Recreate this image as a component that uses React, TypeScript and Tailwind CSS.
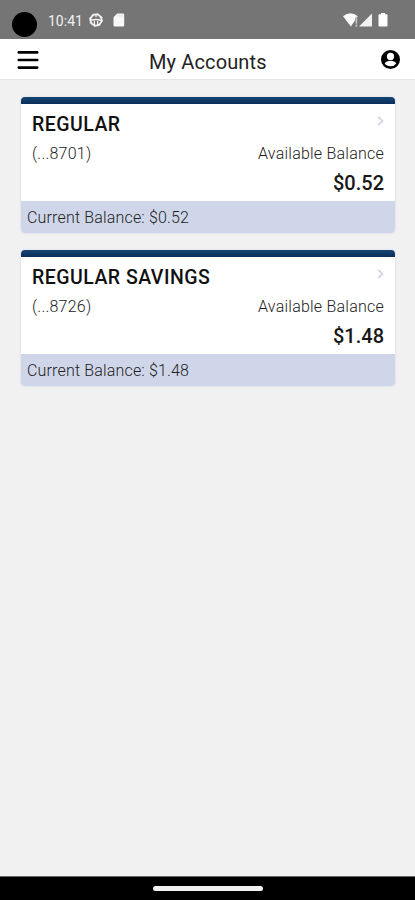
type Account = {
  name: string;
  mask: string;
  available: string;
  current: string;
};

const accounts: Account[] = [
  { name: "REGULAR", mask: "(...8701)", available: "$0.52", current: "$0.52" },
  { name: "REGULAR SAVINGS", mask: "(...8726)", available: "$1.48", current: "$1.48" },
];

function StatusBar() {
  return (
    <div className="flex h-[39px] items-start bg-[#757575] pl-3 pr-[27px] text-white">
      <span className="mt-3 h-[25px] w-[25px] rounded-full bg-black" />
      <span className="ml-[11px] mt-[11px] w-[35px] whitespace-nowrap text-[14px] leading-5 text-[#f0f0f0]">
        10:41
      </span>
      <svg viewBox="0 0 14 14" className="ml-[6px] mt-[13px] h-[14px] w-[14px]" fill="none" stroke="#f4f4f4">
        <circle cx="7" cy="7" r="5.6" strokeWidth="1.8" />
        <circle cx="7" cy="7" r="6.5" strokeWidth=".8" strokeDasharray="2 3.1" />
        <path d="M2.2 7.2Q7 5.6 11.8 7.2" strokeWidth="1.5" />
        <path d="M5.4 8v4M8.6 8v4" strokeWidth="1.2" />
        <path d="M7 2v2.2" strokeWidth="1.2" />
      </svg>
      <svg viewBox="0 0 12 14" className="ml-[10px] mt-[13px] h-[14px] w-3">
        <path d="M4.3.5H10a1.2 1.2 0 0 1 1.2 1.2v10.6a1.2 1.2 0 0 1-1.2 1.2H1.7a1.2 1.2 0 0 1-1.2-1.2V4.3z" fill="#f8f8f8" />
        <path d="M4.8 2v1.6M6.8 2v1.6M8.8 2v1.6" stroke="#d0d0d0" strokeWidth=".7" />
      </svg>
      <div className="ml-auto mt-[13px] flex">
        <svg viewBox="0 0 16 14" className="h-[14px] w-4">
          <path d="M0 3.2Q7.5-2.8 14.8 3.2L7.9 13.5z" fill="#fafafa" />
          <path d="M12 5h2.8v9h-2.8z" fill="#858585" />
          <path d="M13.4 3.5v7M13.4 11.7v1.8" stroke="#c8c8c8" strokeWidth="1.3" />
        </svg>
        <svg viewBox="0 0 13 14" className="h-[14px] w-[13px]">
          <path d="M13 .5v13H0z" fill="#f2f2f2" />
        </svg>
        <svg viewBox="0 0 10 14" className="ml-[6px] h-[14px] w-[10px]">
          <path d="M3 0h4v1.3h1.6q.9 0 .9.9v10.4q0 .9-.9.9H1.4q-.9 0-.9-.9V2.2q0-.9.9-.9H3z" fill="#fff" />
        </svg>
      </div>
    </div>
  );
}

function Header() {
  return (
    <header className="flex h-[41px] items-center border-b border-[#e6e6e6] bg-white pl-[17px] pr-[15px]">
      <button type="button" className="mt-px">
        <svg viewBox="0 0 22 20" className="h-5 w-[22px]" stroke="#000" strokeWidth="2.7" strokeLinecap="round">
          <path d="M1.8 2.4h18.4M1.8 10h18.4M1.8 17.6h18.4" />
        </svg>
      </button>
      <h1 className="ml-[110px] mt-[5px] text-[20px] font-normal leading-6 tracking-[0.13px] text-[#222]">
        My Accounts
      </h1>
      <button type="button" className="ml-auto mt-px">
        <svg viewBox="2 2 20 20" className="h-[19px] w-[19px]">
          <path
            d="M12 2a10 10 0 1 0 0 20 10 10 0 0 0 0-20zm0 3a3.8 3.8 0 1 1 0 7.6A3.8 3.8 0 0 1 12 5zM12 19.2c-2.6 0-4.8-1-6-2.9 0-2 4-3.1 6-3.1s6 1.1 6 3.1a7 7 0 0 1-6 2.9z"
            fill="#000"
          />
        </svg>
      </button>
    </header>
  );
}

function AccountCard({ account }: { account: Account }) {
  return (
    <section className="h-[136px] overflow-hidden rounded-[4px] bg-white shadow-[0_0_2px_#c5cce3]">
      <div className="h-[7px] bg-linear-to-b from-[#154571] to-[#0a2e5c]" />
      <div className="h-[97px] px-[11px] pt-[9px]">
        <div className="flex justify-between">
          <h2 className="text-[19.5px] font-medium leading-6 tracking-[0.48px] text-[#111]">
            {account.name}
          </h2>
          <svg viewBox="0 0 7 10" className="mt-[3px] h-[10px] w-[7px]" fill="none" stroke="#cfd6e4" strokeWidth="1.8">
            <path d="M1.2.8 5.5 5 1.2 9.2" />
          </svg>
        </div>
        <div className="mt-[7px] flex justify-between text-[16px] font-light leading-5 tracking-[0.23px] text-[#222]">
          <span>{account.mask}</span>
          <span>Available Balance</span>
        </div>
        <p className="mt-[7px] text-right text-[20px] font-medium leading-6 text-[#181818]">
          {account.available}
        </p>
      </div>
      <p className="h-8 bg-[#d0d6e9] pl-[6px] pt-px text-[16px] font-light leading-8 tracking-[0.17px] text-[#222]">
        Current Balance: {account.current}
      </p>
    </section>
  );
}

export default function App() {
  return (
    <div className="flex h-[900px] w-[415px] flex-col overflow-hidden bg-[#f1f1f1] font-[Roboto,sans-serif]">
      <StatusBar />
      <Header />
      <main className="flex flex-1 flex-col gap-[17px] pl-[21px] pr-[20px] pt-[17px]">
        {accounts.map((account) => (
          <AccountCard key={account.mask} account={account} />
        ))}
      </main>
      <div className="flex h-6 justify-center border-t border-[#666] bg-black pt-[9px]">
        <span className="h-[5px] w-[110px] rounded-full bg-[#f2f2f2]" />
      </div>
    </div>
  );
}
